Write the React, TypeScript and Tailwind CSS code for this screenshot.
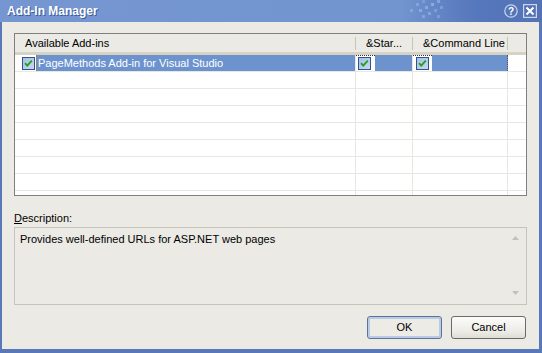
import React from "react";

const font = "font-['Liberation_Sans',Tahoma,sans-serif]";

function Check() {
  return (
    <svg width="13" height="13" viewBox="0 0 13 13" className="shrink-0">
      <defs>
        <linearGradient id="cbfill" x1="0" y1="0" x2="1" y2="1">
          <stop offset="0" stopColor="#a9bfe2" />
          <stop offset="1" stopColor="#c9d8ee" />
        </linearGradient>
      </defs>
      <rect x="0.5" y="0.5" width="12" height="12" fill="url(#cbfill)" stroke="#2a5591" />
      <path d="M3 6.2 L5.2 8.6 L9.8 3.6" fill="none" stroke="#21a121" strokeWidth="1.8" />
    </svg>
  );
}

function HeaderCell({ label, className }: { label: string; className: string }) {
  return (
    <div className={`flex items-center justify-between ${className}`}>
      <span className="pl-[10px] whitespace-nowrap">{label}</span>
      <span className="w-px h-[13px] bg-[#c7c5b2]" />
    </div>
  );
}

function TitleButtons() {
  return (
    <div className="flex items-center gap-[5px] mr-[5px]">
      <svg width="14" height="14" viewBox="0 0 14 14">
        <circle cx="7" cy="7" r="6.2" fill="none" stroke="#c9d6ee" strokeWidth="1.2" />
        <text x="7" y="11" textAnchor="middle" fontSize="10" fontWeight="bold" fill="#ffffff" fontFamily="Liberation Sans, sans-serif">?</text>
      </svg>
      <svg width="14" height="14" viewBox="0 0 14 14">
        <rect x="0.6" y="0.6" width="12.8" height="12.8" fill="none" stroke="#c9d6ee" strokeWidth="1.2" />
        <path d="M3.5 3.5 L10.5 10.5 M10.5 3.5 L3.5 10.5" stroke="#ffffff" strokeWidth="2" />
      </svg>
    </div>
  );
}

function Checker() {
  const cells: [number, number, string][] = [
    [0, 9, "#86a4da"], [6, 3, "#86a4da"], [9, 9, "#8aa8dc"], [12, 0, "#7d9cd6"],
    [15, 6, "#8aa8dc"], [18, 12, "#86a4da"], [21, 3, "#8eabdd"], [24, 9, "#7d9cd6"],
    [27, 0, "#86a4da"], [27, 15, "#7d9cd6"], [30, 6, "#7d9cd6"], [12, 15, "#86a4da"],
  ];
  return (
    <svg width="36" height="22" className="shrink-0">
      {cells.map(([x, y, c], i) => (
        <rect key={i} x={x} y={y} width="3" height="3" fill={c} />
      ))}
    </svg>
  );
}

export default function App() {
  const emptyRows = Array.from({ length: 8 });
  return (
    <div className={`w-[542px] h-[353px] bg-[#5878b8] flex flex-col text-[11px] text-black ${font}`}>
      {/* title bar */}
      <div className="h-[22px] flex items-center bg-[linear-gradient(to_right,#7596d1_0%,#7294cf_74%,#6587c7_80%,#5577bb_88%,#5473b6_100%)]">
        <span className="pl-[7px] text-[12px] font-bold text-white [text-shadow:1px_1px_0_#3a5a9a]">
          Add-In Manager
        </span>
        <div className="flex-1" />
        <Checker />
        <div className="w-[58px]" />
        <TitleButtons />
      </div>

      {/* client */}
      <div className="ml-[2px] mr-[3px] mb-[4px] flex-1 bg-[#ebeae4] flex flex-col px-[12px] pt-[11px] pb-[10px]">
        {/* list */}
        <div className="h-[163px] border border-[#7f7f7f] bg-white flex flex-col overflow-hidden">
          <div className="h-[21px] flex shrink-0 bg-[#ebeae4] border-b-[3px] border-[#d6d3c4]">
            <HeaderCell label="Available Add-ins" className="w-[341px]" />
            <HeaderCell label="&Star..." className="w-[57px]" />
            <HeaderCell label="&Command Line" className="w-[95px]" />
            <div className="flex-1" />
          </div>

          <div className="flex-1 overflow-hidden">
            {/* selected row */}
            <div className="h-[17px] flex border-b border-[#e8e7e1]">
              <div className="w-[341px] flex border-r border-[#e8e7e1]">
                <div className="w-[21px] flex items-center pl-[7px]">
                  <Check />
                </div>
                <div className="flex-1 bg-[#6d93cf] text-white flex items-center pl-px border-l border-dotted border-[#b07a2a]">
                  PageMethods Add-in for Visual Studio
                </div>
              </div>
              <div className="w-[57px] flex border-r border-[#e8e7e1]">
                <div className="w-[19px] flex items-center pl-[2px] border-t border-dotted border-[#333]">
                  <Check />
                </div>
                <div className="flex-1 bg-[#6d93cf]" />
              </div>
              <div className="w-[95px] flex">
                <div className="w-[19px] flex items-center pl-[3px] border-t border-dotted border-[#333]">
                  <Check />
                </div>
                <div className="flex-1 bg-[#6d93cf] border-r border-dotted border-[#555]" />
              </div>
              <div className="flex-1" />
            </div>

            {emptyRows.map((_, i) => (
              <div key={i} className="h-[17px] flex border-b border-[#e8e7e1]">
                <div className="w-[341px] border-r border-[#e8e7e1]" />
                <div className="w-[57px] border-r border-[#e8e7e1]" />
                <div className="w-[95px] border-r border-[#e8e7e1]" />
                <div className="flex-1" />
              </div>
            ))}
          </div>
        </div>

        {/* description */}
        <div className="mt-[13px] h-[18px] flex items-center">
          <span>
            <span className="underline">D</span>escription:
          </span>
        </div>
        <div className="h-[78px] border border-[#c5c4bc] flex justify-between pl-[5px] pr-[7px] pt-[3px] pb-[9px]">
          <span>Provides well-defined URLs for ASP.NET web pages</span>
          <div className="flex flex-col justify-between pt-[5px]">
            <svg width="7" height="4" viewBox="0 0 7 4">
              <path d="M0 4 L3.5 0 L7 4 Z" fill="#c2c1ba" />
            </svg>
            <svg width="7" height="4" viewBox="0 0 7 4">
              <path d="M0 0 L3.5 4 L7 0 Z" fill="#c2c1ba" />
            </svg>
          </div>
        </div>

        {/* buttons */}
        <div className="mt-auto flex justify-end gap-[9px] pr-[1px]">
          <button className="w-[75px] h-[23px] rounded-[3px] border border-[#5f7396] bg-[#ecebe6] shadow-[inset_0_0_0_2px_#b8cae6]">
            OK
          </button>
          <button className="w-[75px] h-[23px] rounded-[3px] border border-[#6a6a6a] bg-[linear-gradient(to_bottom,#fbfbf9,#ecebe6_70%,#dedcd4)]">
            Cancel
          </button>
        </div>
      </div>
    </div>
  );
}
